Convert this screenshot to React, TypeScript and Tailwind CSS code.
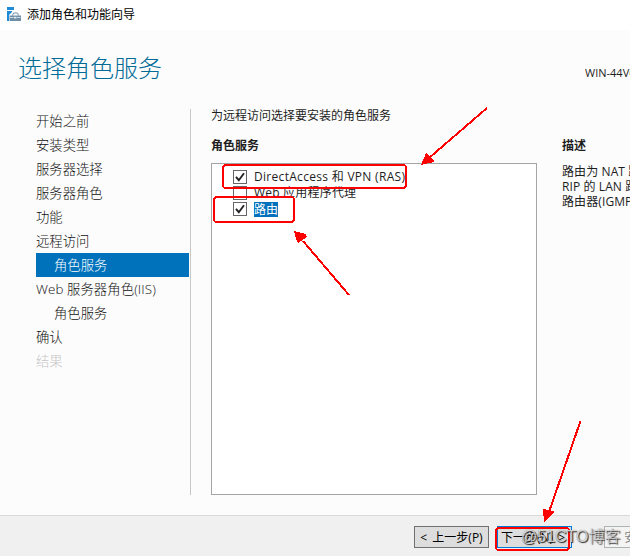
import clsx from "clsx";

const steps = [
  { label: "开始之前" },
  { label: "安装类型" },
  { label: "服务器选择" },
  { label: "服务器角色" },
  { label: "功能" },
  { label: "远程访问" },
  { label: "角色服务", nested: true, active: true },
  { label: "Web 服务器角色(IIS)", latin: true },
  { label: "角色服务", nested: true },
  { label: "确认" },
  { label: "结果", disabled: true },
];

const roleServices = [
  { label: "DirectAccess 和 VPN (RAS)", checked: true, tracking: "tracking-[0.3px]" },
  { label: "Web 应用程序代理", checked: false, tracking: "tracking-[0.2px]" },
  { label: "路由", checked: true, selected: true },
];

function WizardIcon() {
  return (
    <svg className="w-[14px] h-[14px] shrink-0" viewBox="0 0 14 14">
      <path d="M0 0h7v3H0zM0 4h5v1L2 8v6H0z" fill="#1e8ad8" />
      <path d="M2.5 8.5h11.5v5.5H2.5z" fill="#6f8fa8" />
      <path d="M5.5 8.5L6.5 6h4l1 2.5" fill="none" stroke="#6f8fa8" />
      <path d="M3 10.5h3.5M10 10.5h3.5" fill="none" stroke="#e3ebf1" strokeWidth="0.8" />
      <path d="M7 9.8h2.5v1.6H7z" fill="#e3ebf1" />
    </svg>
  );
}

function CheckBox({ checked }: { checked: boolean }) {
  return (
    <span className="w-[14px] h-[14px] shrink-0 border border-[#666] bg-white">
      {checked && (
        <svg className="w-3 h-3 block" viewBox="0 0 12 12">
          <path d="M2 5.8l2.8 3.4L10 2.2" fill="none" stroke="#222" strokeWidth="1.9" />
        </svg>
      )}
    </span>
  );
}

function Annotations() {
  return (
    <svg className="absolute inset-0 w-[630px] h-[556px] pointer-events-none" viewBox="0 0 630 556" fill="none" stroke="#f00" strokeWidth="2" shapeRendering="crispEdges">
      <rect x="223" y="165" width="183" height="23" rx="3" />
      <rect x="214" y="197" width="80" height="25" rx="3" />
      <rect x="496" y="528" width="73" height="22" rx="3" />
      <path d="M487 108L429 158M349 295L303 241M580.5 421L549 512" />
      <g fill="#f00" stroke="none">
        <path d="M421 165L426 153L428 154L434 161L434 162Z" />
        <path d="M294 231L306 234L307 237L298 243L297 242Z" />
        <path d="M544 522L543 509L554 511L554 513Z" />
      </g>
    </svg>
  );
}

export default function App() {
  return (
    <div className="relative w-[630px] h-[556px] overflow-hidden flex flex-col bg-[#fcfcfc] text-[12px] text-[#1e1e1e] font-['Open_Sans','Noto_Sans_CJK_SC',sans-serif]">
      <header className="h-[30px] shrink-0 bg-white flex items-center gap-[6px] pl-[7px] pb-[2px] text-black">
        <WizardIcon />
        <span className="leading-4 pt-px">添加角色和功能向导</span>
      </header>

      <div className="h-[79px] shrink-0 flex justify-between pl-[18px]">
        <h1 className="mt-[20px] text-[24px] leading-9 font-light text-[#006b96]">选择角色服务</h1>
        <span className="mt-[35px] w-[45px] text-[11px] leading-4 whitespace-nowrap">WIN-44V6</span>
      </div>

      <main className="flex-1 min-h-0 flex">
        <nav className="w-[191px] h-[386px] pl-9 pr-px border-r border-[#c8c8c8] text-[13.33px] font-light text-[#111]">
          {steps.map((s, i) => (
            <div
              key={i}
              className={clsx(
                "h-6 leading-[25px] whitespace-nowrap",
                s.nested && "pl-[18px]",
                s.latin && "tracking-[0.1px]",
                s.active && "bg-[#0072bc] text-white",
                s.disabled && "text-[#c5c5c5]"
              )}
            >
              {s.label}
            </div>
          ))}
        </nav>

        <section className="ml-5 w-[326px] flex flex-col">
          <p className="h-[30px] leading-[14px]">为远程访问选择要安装的角色服务</p>
          <h2 className="h-6 leading-[14px] font-bold">角色服务</h2>
          <div className="h-[332px] border border-[#a5a5a5] bg-white pt-[5px] pl-[21px]">
            {roleServices.map((r) => (
              <div key={r.label} className="h-4 flex items-center gap-[7px]">
                <CheckBox checked={r.checked} />
                <span
                  className={clsx(
                    "h-[15px] whitespace-nowrap",
                    r.tracking,
                    r.selected ? "leading-[15px] bg-[#0072bc] text-white" : "leading-[14px]"
                  )}
                >
                  {r.label}
                </span>
              </div>
            ))}
          </div>
        </section>

        <aside className="ml-[25px] flex-1 min-w-0 pt-[30px] overflow-hidden whitespace-nowrap">
          <h2 className="h-[25px] leading-[14px] font-bold">描述</h2>
          <p className="leading-[15px] tracking-[0.1px]">
            路由为 NAT 路由器
            <br />
            RIP 的 LAN 路由器
            <br />
            路由器(IGMP 代理)
          </p>
        </aside>
      </main>

      <footer className="h-[41px] shrink-0 border-t border-[#d9d9d9] bg-[#f0f0f0] flex pt-[10px] pl-[414px] text-black whitespace-nowrap">
        <button className="w-[75px] h-[22px] shrink-0 border border-[#707070] bg-[#ddd] leading-[22px] [word-spacing:2px]">&lt; 上一步(P)</button>
        <button className="ml-2 w-[75px] h-[22px] shrink-0 border border-[#0078d7] bg-[#ddd] leading-[22px] [word-spacing:2px] pr-[3px]">下一步(N) &gt;</button>
        <button className="ml-8 w-[75px] h-[22px] shrink-0 border border-[#adb2b5] bg-[#f4f4f4] text-[#838383] leading-[22px]">安装(I)</button>
      </footer>

      <Annotations />
      <span className="absolute left-[521px] top-[527px] text-[16px] leading-5 whitespace-nowrap font-['Liberation_Sans','Noto_Sans_CJK_SC',sans-serif] font-light text-white/70 [text-shadow:1px_1px_1px_#222,0_0_1px_#777]">
        @51CTO博客
      </span>
    </div>
  );
}
